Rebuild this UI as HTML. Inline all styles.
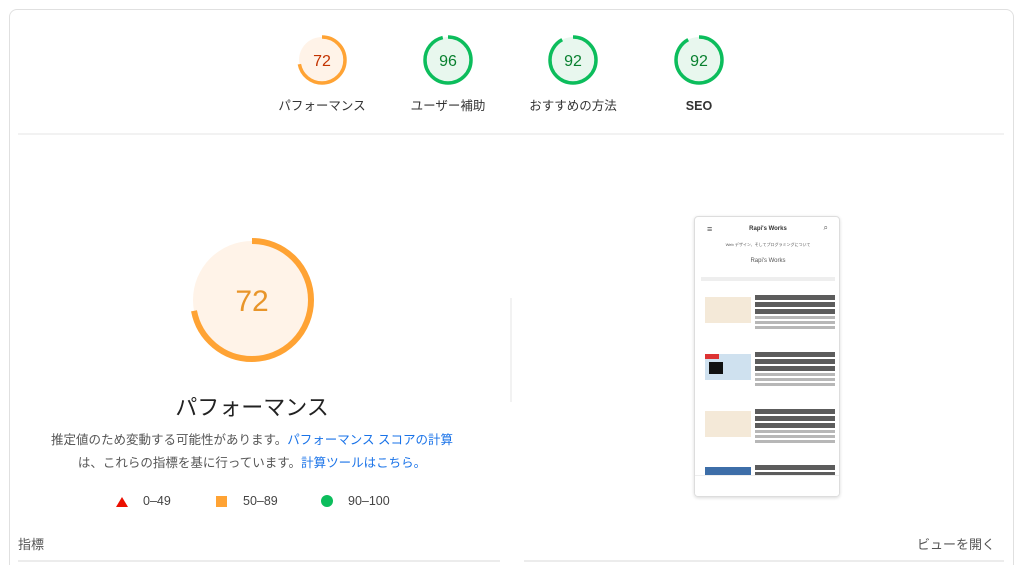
<!DOCTYPE html>
<html><head><meta charset="utf-8"><style>
*{margin:0;padding:0;box-sizing:border-box}
html,body{width:1024px;height:565px;overflow:hidden}
body{background:#fff;font-family:"Liberation Sans","Noto Sans CJK JP",sans-serif;color:#212121;position:relative}
.card{position:absolute;left:9px;top:9px;width:1005px;height:580px;border:1px solid #e0e0e0;border-radius:8px}
.abs{position:absolute}
.lab{position:absolute;width:140px;text-align:center;font-size:12.5px;line-height:18px;color:#333}
.mock{position:absolute;left:694px;top:216px;width:146px;height:281px;border:1px solid #ddd;border-radius:4px;box-shadow:0 1px 3px rgba(0,0,0,.15);overflow:hidden;font-size:5px;color:#555}
.item{position:absolute;left:10px;width:130px;height:50px}
.th{position:absolute;left:0;top:4px;width:46px;height:26px;background:#f4e9d8}
.tx{position:absolute;left:50px;top:0;width:80px}
.tx b{display:block;height:5px;margin:2px 0;background:#333;opacity:.8}
.tx i{display:block;height:3px;margin:2px 0;background:#999;opacity:.7}
</style></head><body>
<div class="card"></div>
<svg class="abs" style="left:0;top:0" width="1024" height="565">
<g fill="none" stroke-width="3.5">
<circle cx="322" cy="60" r="23" fill="#fff3e8" stroke="none"/>
<circle cx="322" cy="60" r="23" stroke="#ffa334" stroke-dasharray="104 200" transform="rotate(-90 322 60)"/>
<circle cx="448" cy="60" r="23" fill="#e8f7ee" stroke="#0cbd5c" stroke-dasharray="139 200" transform="rotate(-90 448 60)"/>
<circle cx="573" cy="60" r="23" fill="#e8f7ee" stroke="#0cbd5c" stroke-dasharray="133 200" transform="rotate(-90 573 60)"/>
<circle cx="699" cy="60" r="23" fill="#e8f7ee" stroke="#0cbd5c" stroke-dasharray="133 200" transform="rotate(-90 699 60)"/>
<circle cx="252" cy="300" r="59" fill="#fff3e8" stroke="none"/>
<circle cx="252" cy="300" r="59" stroke="#ffa334" stroke-width="6" stroke-dasharray="267 400" transform="rotate(-90 252 300)"/>
</g>
<g font-family="Liberation Sans, sans-serif" text-anchor="middle" font-size="16">
<text x="322" y="66" fill="#c33300">72</text>
<text x="448" y="66" fill="#08802f">96</text>
<text x="573" y="66" fill="#08802f">92</text>
<text x="699" y="66" fill="#08802f">92</text>
<text x="252" y="311" font-size="30" fill="#e8952a">72</text>
</g>
<line x1="18" y1="134" x2="1004" y2="134" stroke="#e5e5e5"/>
<line x1="511" y1="298" x2="511" y2="402" stroke="#e5e5e5"/>
<line x1="18" y1="561" x2="500" y2="561" stroke="#ececec" stroke-width="2"/>
<line x1="524" y1="561" x2="1004" y2="561" stroke="#ececec" stroke-width="2"/>
<polygon points="122,497 128,507 116,507" fill="#eb0f00"/>
<rect x="216" y="496" width="11" height="11" fill="#ffa334"/>
<circle cx="327" cy="501" r="6" fill="#0cbd5c"/>
</svg>
<div class="lab" style="left:252px;top:97px">パフォーマンス</div>
<div class="lab" style="left:378px;top:97px">ユーザー補助</div>
<div class="lab" style="left:503px;top:97px">おすすめの方法</div>
<div class="lab" style="left:629px;top:97px;font-weight:bold">SEO</div>
<div class="abs" style="left:102px;width:300px;text-align:center;top:390px;font-size:22px;color:#222">パフォーマンス</div>
<div class="abs" style="left:40px;width:424px;text-align:center;top:429px;font-size:12.5px;line-height:23px;color:#555">推定値のため変動する可能性があります。<span style="color:#1a73e8">パフォーマンス スコアの計算</span><br>は、これらの指標を基に行っています。<span style="color:#1a73e8">計算ツールはこちら。</span></div>
<div class="abs" style="top:494px;left:143px;font-size:12.5px;color:#444">0–49</div>
<div class="abs" style="top:494px;left:243px;font-size:12.5px;color:#444">50–89</div>
<div class="abs" style="top:494px;left:348px;font-size:12.5px;color:#444">90–100</div>
<div class="abs" style="top:534px;left:18px;font-size:13px;color:#555">指標</div>
<div class="abs" style="top:534px;right:29px;font-size:13px;color:#555">ビューを開く</div>
<div class="mock">
<div class="abs" style="left:12px;top:7px;font-size:9px">≡</div>
<div class="abs" style="left:0;width:146px;text-align:center;top:9px;font-size:6px;font-weight:bold;color:#333">Rapi's Works</div>
<div class="abs" style="right:11px;top:6px;font-size:8px">⌕</div>
<div class="abs" style="left:0;width:146px;text-align:center;top:25px;font-size:4px">Web デザイン、そしてプログラミングについて</div>
<div class="abs" style="left:0;width:146px;text-align:center;top:41px;font-size:6px">Rapi's Works</div>
<div class="abs" style="left:6px;top:60px;width:134px;height:4px;background:#eee"></div>
<div class="item" style="top:76px"><div class="th"></div><div class="tx"><b></b><b></b><b></b><i></i><i></i><i></i></div></div>
<div class="item" style="top:133px"><div class="th" style="background:#cfe1ef"><div style="position:absolute;left:0;top:0;width:14px;height:5px;background:#d33"></div><div style="position:absolute;left:4px;top:8px;width:14px;height:12px;background:#111"></div></div><div class="tx"><b></b><b></b><b></b><i></i><i></i><i></i></div></div>
<div class="item" style="top:190px"><div class="th"></div><div class="tx"><b></b><b></b><b></b><i></i><i></i><i></i></div></div>
<div class="item" style="top:246px"><div class="th" style="background:#3d6ea8;height:12px"></div><div class="tx"><b></b><b></b></div></div>
<div class="abs" style="left:0;top:258px;width:146px;height:23px;background:#fff;border-top:1px solid #eee"></div>
</div>
</body></html>
